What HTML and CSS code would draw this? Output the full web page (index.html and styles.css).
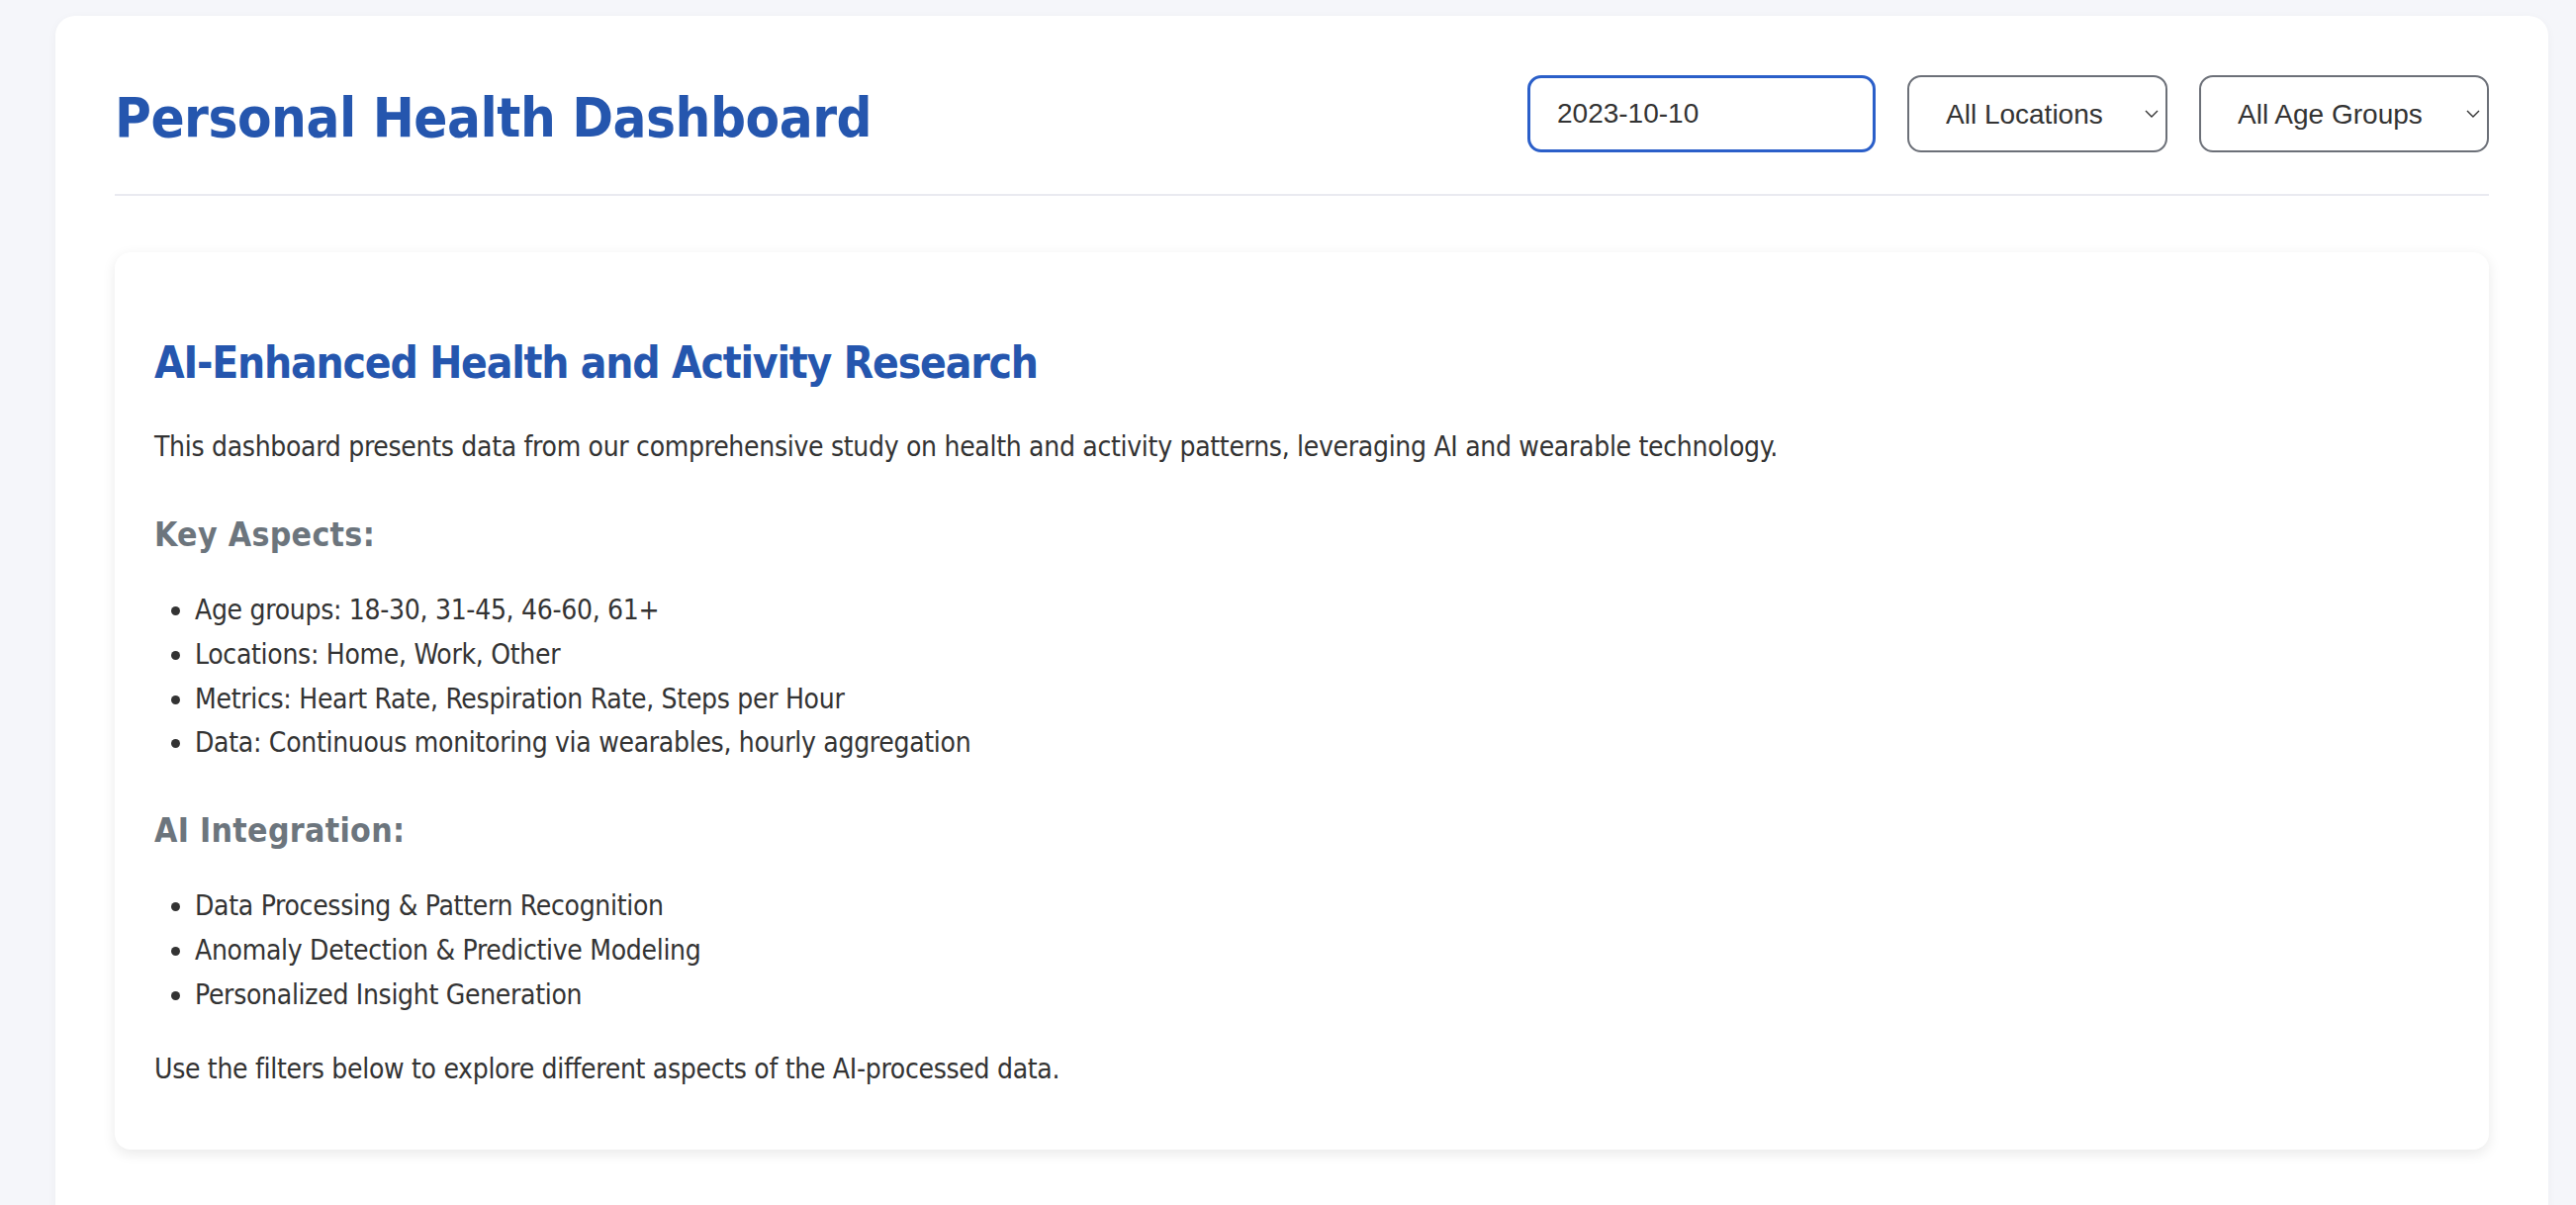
FILE: index.html
```html
<!DOCTYPE html>
<html lang="en">
<head>
<meta charset="UTF-8">
<title>Personal Health Dashboard</title>
<link rel="stylesheet" href="styles.css">
</head>
<body>
<div class="dashboard">
	<div class="header">
		<h1>Personal Health Dashboard</h1>
		<div class="filters">
			<input class="date-input" type="text" value="2023-10-10">
			<span class="select-wrap">
				<select class="filter-select">
					<option>All Locations</option>
					<option>Home</option>
					<option>Work</option>
					<option>Other</option>
				</select>
				<svg class="chevron" width="14" height="8" viewBox="0 0 14 8"><path d="M1 1 L7 7 L13 1" fill="none" stroke="#333" stroke-width="1.4"/></svg>
			</span>
			<span class="select-wrap">
				<select class="filter-select">
					<option>All Age Groups</option>
					<option>18-30</option>
					<option>31-45</option>
					<option>46-60</option>
					<option>61+</option>
				</select>
				<svg class="chevron" width="14" height="8" viewBox="0 0 14 8"><path d="M1 1 L7 7 L13 1" fill="none" stroke="#333" stroke-width="1.4"/></svg>
			</span>
		</div>
	</div>

	<div class="intro">
		<h2>AI-Enhanced Health and Activity Research</h2>
		<p>This dashboard presents data from our comprehensive study on health and activity patterns, leveraging AI and wearable technology.</p>
		<h3>Key Aspects:</h3>
		<ul>
			<li>Age groups: 18-30, 31-45, 46-60, 61+</li>
			<li>Locations: Home, Work, Other</li>
			<li>Metrics: Heart Rate, Respiration Rate, Steps per Hour</li>
			<li>Data: Continuous monitoring via wearables, hourly aggregation</li>
		</ul>
		<h3>AI Integration:</h3>
		<ul class="ai-list">
			<li>Data Processing &amp; Pattern Recognition</li>
			<li>Anomaly Detection &amp; Predictive Modeling</li>
			<li>Personalized Insight Generation</li>
		</ul>
		<p class="note">Use the filters below to explore different aspects of the AI-processed data.</p>
	</div>
</div>
</body>
</html>
```

FILE: styles.css
```css
body {
	margin: 0;
	background-color: #f5f6fa;
	font-family: "DejaVu Sans Condensed", "DejaVu Sans", sans-serif;
	font-stretch: condensed;
	color: #333;
}

.dashboard {
	box-sizing: border-box;
	margin: 16px 28px 0 56px;
	min-height: calc(100vh - 16px);
	padding: 60px 60px;
	background: #fff;
	border-radius: 20px 20px 0 0;
	box-shadow: 0 2px 10px rgba(0, 0, 0, 0.04);
}

.header {
	display: flex;
	justify-content: space-between;
	align-items: center;
	padding-bottom: 42px;
	border-bottom: 2px solid #e9eaf0;
}

h1 {
	margin: 7px 0 0;
	font-size: 56px;
	line-height: 1.2;
	font-weight: bold;
	letter-spacing: -0.5px;
	color: #2556ae;
}

.filters {
	display: flex;
	gap: 32px;
	align-items: center;
}

.date-input,
.filter-select {
	box-sizing: border-box;
	height: 78px;
	font-family: "Liberation Sans", Arial, sans-serif;
	font-size: 28px;
	color: #333;
	background: #fff;
	outline: none;
}

.date-input {
	width: 352px;
	padding: 0 24px 0 27px;
	border: 3px solid #2b5fc9;
	border-radius: 14px;
}

.select-wrap {
	position: relative;
	display: inline-block;
}

.filter-select {
	-webkit-appearance: none;
	appearance: none;
	padding: 0 63px 0 37px;
	border: 2px solid #6c7078;
	border-radius: 14px;
	display: block;
}

.chevron {
	position: absolute;
	right: 9px;
	top: 35px;
	pointer-events: none;
}

.intro {
	margin-top: 57px;
	padding: 40px;
	background: #fff;
	border-radius: 16px;
	box-shadow: 0 4px 14px rgba(0, 0, 0, 0.09);
}

.intro h2 {
	margin: 46px 0 36px;
	font-size: 44px;
	line-height: 1.2;
	letter-spacing: -1.2px;
	color: #2556ae;
}

.intro p {
	margin: 0 0 46px;
	font-size: 28px;
	line-height: 1.6;
	letter-spacing: -0.3px;
}

.intro h3 {
	margin: 0 0 34px;
	font-size: 33.6px;
	line-height: 1.2;
	letter-spacing: 0.3px;
	color: #6c757d;
}

.intro ul {
	margin: 0 0 46px;
	padding-left: 41px;
	font-size: 28px;
	line-height: 1.6;
	letter-spacing: -0.3px;
}

.intro ul.ai-list {
	margin-bottom: 30px;
}

.intro p.note {
	margin-bottom: 18px;
}
```
